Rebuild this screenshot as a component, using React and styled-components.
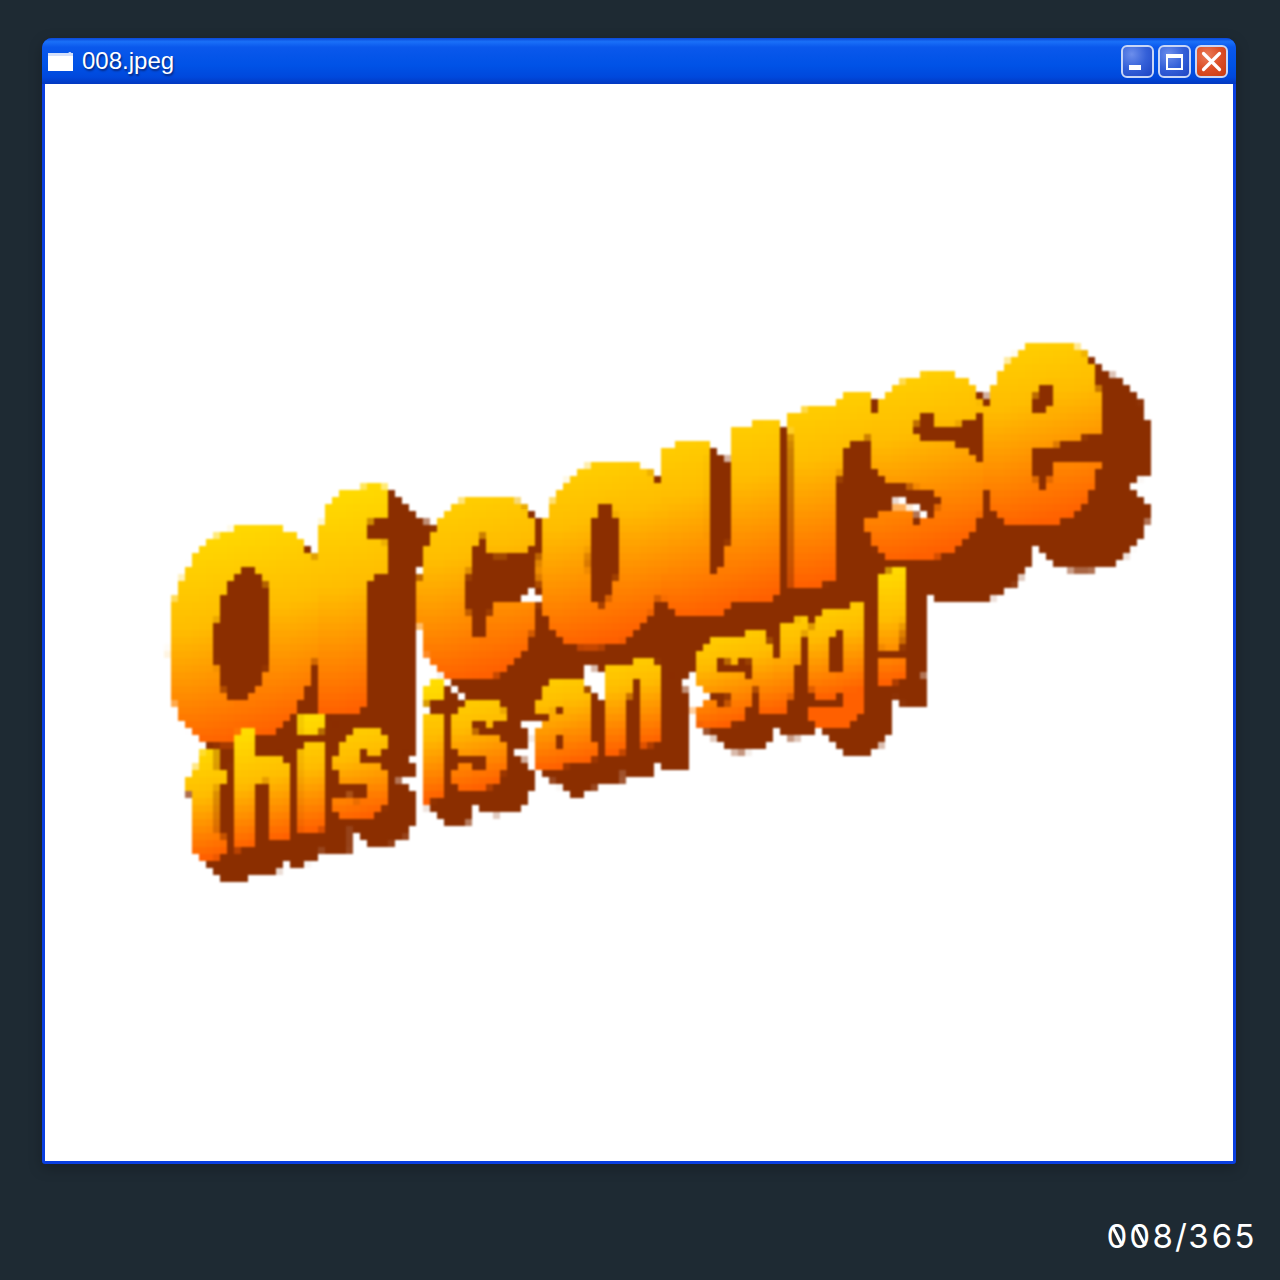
import styled, { createGlobalStyle } from "styled-components";

const Global = createGlobalStyle`
  html, body { margin: 0; padding: 0; background: #1e2a33; }
`;

const Page = styled.div`
  width: 1280px;
  height: 1280px;
  box-sizing: border-box;
  padding: 38px 44px 0 42px;
  background: #1e2a33;
  display: flex;
  flex-direction: column;
  overflow: hidden;
`;

const Win = styled.div`
  height: 1126px;
  box-sizing: border-box;
  display: flex;
  flex-direction: column;
  background: #0a3fe0;
  border-radius: 10px 10px 3px 3px;
  padding: 0 3px 3px;
  box-shadow: 0 4px 14px rgba(0, 0, 0, 0.25);
`;

const TitleBar = styled.div`
  height: 46px;
  margin: 0 -3px;
  padding: 0 8px 0 6px;
  display: flex;
  align-items: center;
  gap: 9px;
  border-radius: 10px 10px 0 0;
  background: linear-gradient(180deg, #0a48d8 0%, #1a70f8 8%, #0a58ec 20%, #0052e6 60%, #0048dc 85%, #0338c0 100%);
`;

const Title = styled.div`
  flex: 1;
  font-family: "Liberation Sans", Arial, sans-serif;
  font-size: 24px;
  line-height: 28px;
  color: #fff;
  text-shadow: 1px 2px 2px #08267c;
`;

const Btn = styled.div`
  width: 33px;
  height: 33px;
  box-sizing: border-box;
  border: 2px solid #c8d6f6;
  border-radius: 6px;
  display: flex;
  align-items: center;
  justify-content: center;
  background: ${(p) =>
    p.$close
      ? "radial-gradient(circle at 35% 30%, #ea7c58 0%, #dc4e26 50%, #c83a10 100%)"
      : "radial-gradient(circle at 30% 25%, #6c8eec 0%, #3460d8 50%, #1c44c4 100%)"};
`;

const ButtonRow = styled.div`
  display: flex;
  gap: 4px;
`;

const Client = styled.div`
  flex: 1;
  background: #fff;
  min-height: 0;
`;

const Art = styled.svg`
  display: block;
  width: 100%;
  height: 100%;
  text {
    font-family: "Liberation Sans Narrow", "Liberation Sans", sans-serif;
    font-weight: 700;
    stroke-linejoin: round;
  }
`;

const Counter = styled.div`
  margin-top: 49px;
  align-self: flex-end;
  margin-right: -21px;
  display: flex;
  font-family: Inter, "Liberation Sans", sans-serif;
  font-size: 33px;
  line-height: 46px;
  color: #fff;
  letter-spacing: 1.5px;
  font-variant-numeric: tabular-nums;
`;

const SlashedZero = styled.span`
  position: relative;
  &::after {
    content: "";
    position: absolute;
    left: 50%;
    top: 13px;
    width: 2.5px;
    height: 21px;
    margin-left: -2px;
    background: #fff;
    transform: rotate(-27deg);
  }
`;

const DARK = "#8b2e00";
const SCALE_X = 0.64;

// fattens the stems sideways, then puts a dark block behind from offset copies
function ExtrudeFilter({ id, dx, dy, fat }) {
  const steps = Math.ceil(Math.max(dx, dy) / 2);
  const offsets = [];
  for (let i = 1; i <= steps; i++) offsets.push(i);
  return (
    <filter
      id={id}
      filterUnits="userSpaceOnUse"
      x="45"
      y="84"
      width="1188"
      height="1077"
      colorInterpolationFilters="sRGB"
    >
      <feMorphology in="SourceGraphic" operator="dilate" radius={`${fat} 0`} result="fat" />
      {offsets.map((i) => (
        <feOffset key={i} in="fat" dx={(dx * i) / steps} dy={(dy * i) / steps} result={`o${i}`} />
      ))}
      <feMerge result="block">
        {offsets.map((i) => (
          <feMergeNode key={i} in={`o${i}`} />
        ))}
      </feMerge>
      <feFlood floodColor={DARK} />
      <feComposite in2="block" operator="in" result="dark" />
      <feMerge>
        <feMergeNode in="dark" />
        <feMergeNode in="fat" />
      </feMerge>
    </filter>
  );
}

function Slogan({ children, origins, x, y, size, skew, stroke, gradient, filter }) {
  const xs = origins.map((o) => (o - x) / SCALE_X).join(" ");
  return (
    <g filter={`url(#${filter})`}>
      <g transform={`translate(${x} ${y}) skewY(${skew}) scale(${SCALE_X} 1)`}>
        <text x={xs} fontSize={size} fill={`url(#${gradient})`} stroke={`url(#${gradient})`} strokeWidth={stroke}>
          {children}
        </text>
      </g>
    </g>
  );
}

export default function App() {
  return (
    <Page>
      <Global />
      <Win>
        <TitleBar>
          <svg width="25" height="19" viewBox="0 0 25 19">
            <path d="M0 1h20l2-1 3 2v17H0z" fill="#fff" />
            <path d="M0 1h25v3H0z" fill="#d4e0fa" />
          </svg>
          <Title>008.jpeg</Title>
          <ButtonRow>
            <Btn>
              <svg width="29" height="29" viewBox="0 0 29 29">
                <rect x="6" y="18" width="12" height="5" fill="#fff" />
              </svg>
            </Btn>
            <Btn>
              <svg width="29" height="29" viewBox="0 0 29 29">
                <rect x="7" y="8" width="15" height="14" fill="none" stroke="#fff" strokeWidth="2" />
                <rect x="6" y="7" width="17" height="4" fill="#fff" />
              </svg>
            </Btn>
            <Btn $close>
              <svg width="29" height="29" viewBox="0 0 29 29">
                <path d="M6.5 6.5l16 16M22.5 6.5l-16 16" stroke="#fff" strokeWidth="3.2" strokeLinecap="round" />
              </svg>
            </Btn>
          </ButtonRow>
        </TitleBar>
        <Client>
          <Art viewBox="45 84 1188 1077">
            <defs>
              <linearGradient id="big" gradientUnits="userSpaceOnUse" x1="0" y1="-225" x2="0" y2="0">
                <stop offset="0" stopColor="#ffdc00" />
                <stop offset="0.45" stopColor="#ffbc00" />
                <stop offset="1" stopColor="#ff6000" />
              </linearGradient>
              <linearGradient id="small" gradientUnits="userSpaceOnUse" x1="0" y1="-115" x2="0" y2="0">
                <stop offset="0" stopColor="#ffdc00" />
                <stop offset="0.45" stopColor="#ffbc00" />
                <stop offset="1" stopColor="#ff6000" />
              </linearGradient>
              <ExtrudeFilter id="extrudeBig" dx={52} dy={43} fat={8} />
              <ExtrudeFilter id="extrudeSmall" dx={26} dy={24} fat={4} />
              <filter
                id="pixelate"
                filterUnits="userSpaceOnUse"
                primitiveUnits="userSpaceOnUse"
                x="45"
                y="84"
                width="1188"
                height="1077"
                colorInterpolationFilters="sRGB"
              >
                <feFlood x="48" y="87" width="1" height="1" floodColor="#000" />
                <feComposite width="7" height="7" />
                <feTile result="grid" />
                <feComposite in="SourceGraphic" in2="grid" operator="in" />
                <feMorphology operator="dilate" radius="3" />
                <feGaussianBlur stdDeviation="0.9" />
              </filter>
            </defs>
            <g filter="url(#pixelate)">
              <Slogan
                origins={[170, 312, 380, 420, 540, 656, 786, 868, 984]}
                x={170}
                y={757}
                size={296}
                skew={-15.2}
                stroke={6}
                gradient="big"
                filter="extrudeBig"
              >
                Of <tspan fontSize={322}>course</tspan>
              </Slogan>
              <Slogan
                origins={[190, 230, 298, 334, 400, 418, 450, 520, 535, 603, 680, 694, 747, 807, 875]}
                x={190}
                y={861}
                size={158}
                skew={-14.4}
                stroke={3}
                gradient="small"
                filter="extrudeSmall"
              >
                this is an svg!
              </Slogan>
            </g>
          </Art>
        </Client>
      </Win>
      <Counter>
        <SlashedZero>0</SlashedZero>
        <SlashedZero>0</SlashedZero>
        <span>8/365</span>
      </Counter>
    </Page>
  );
}
